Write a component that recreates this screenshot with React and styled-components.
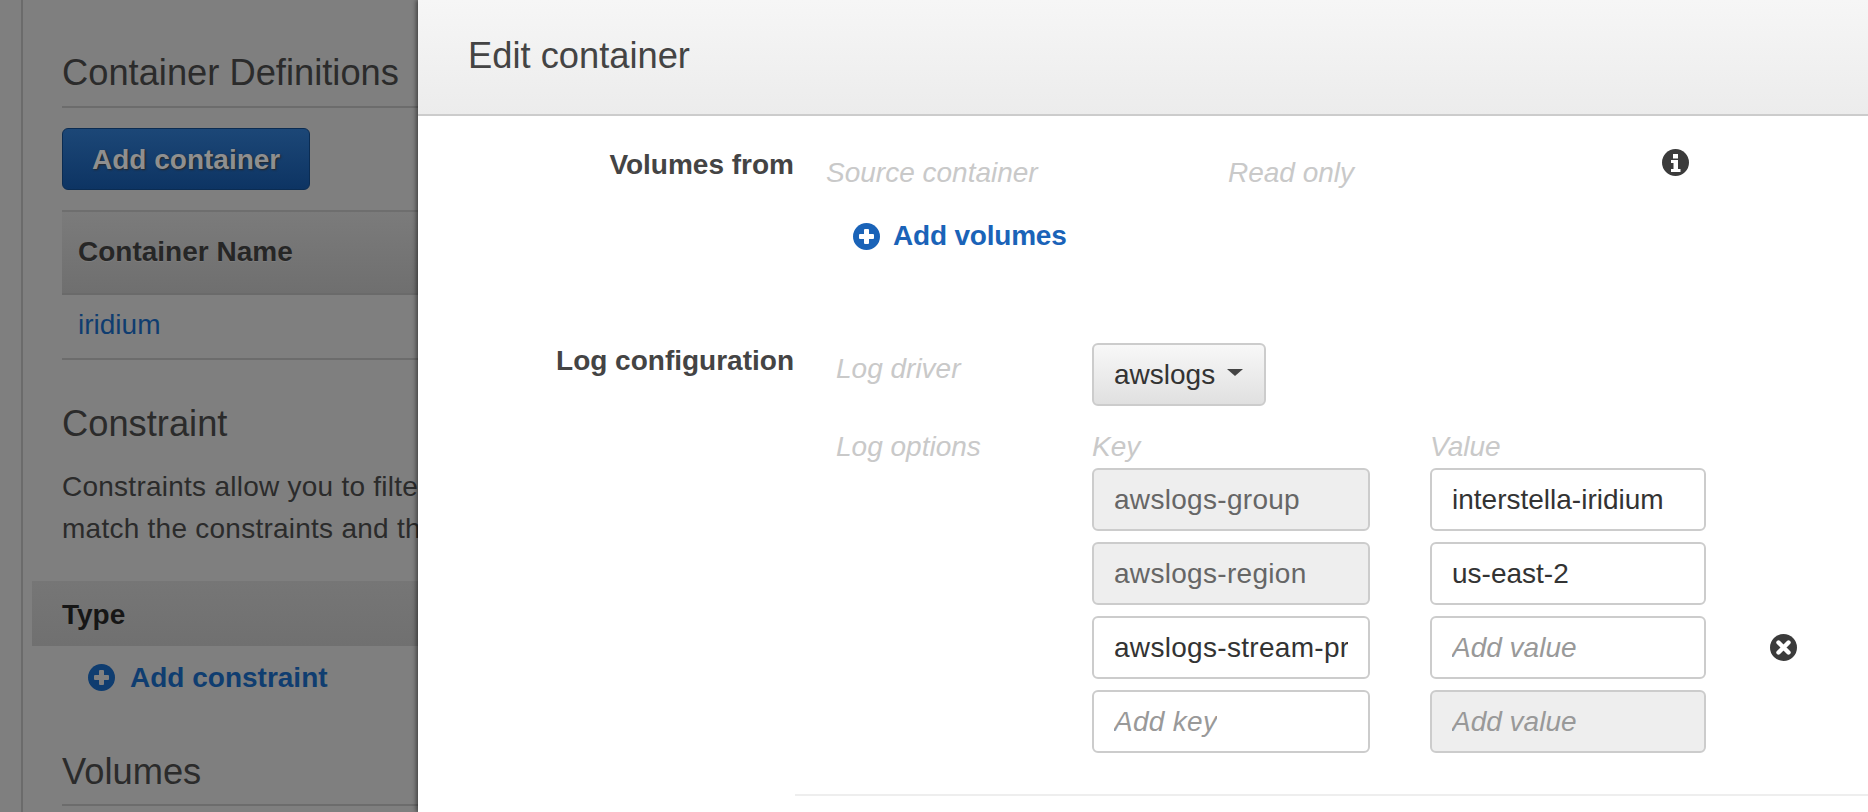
import React from 'react'
import styled, { createGlobalStyle } from 'styled-components'

const GlobalStyle = createGlobalStyle`
  html, body {
    margin: 0;
    padding: 0;
    background: #fff;
    overflow: hidden;
  }
  * {
    box-sizing: border-box;
  }
`

const PlusIcon = ({ color, cross }) => (
  <svg width="27" height="27" viewBox="0 0 27 27">
    <circle cx="13.5" cy="13.5" r="13.5" fill={color} />
    <rect x="11" y="6" width="5" height="15" rx="1" fill={cross} />
    <rect x="6" y="11" width="15" height="5" rx="1" fill={cross} />
  </svg>
)

const InfoIcon = () => (
  <svg width="27" height="27" viewBox="0 0 27 27">
    <circle cx="13.5" cy="13.5" r="13.5" fill="#3b3b3b" />
    <rect x="11" y="5" width="5" height="4.5" fill="#fff" />
    <path d="M9 11h7v9h2.5v3h-9.5v-3h2.5v-6h-2.5z" fill="#fff" />
  </svg>
)

const CloseIcon = () => (
  <svg width="27" height="27" viewBox="0 0 27 27">
    <circle cx="13.5" cy="13.5" r="13.5" fill="#3b3b3b" />
    <path d="M8.5 8.5l10 10M18.5 8.5l-10 10" stroke="#fff" strokeWidth="4.4" strokeLinecap="round" />
  </svg>
)

const keyValueRows = [
  { key: 'awslogs-group', keyLocked: true, value: 'interstella-iridium' },
  { key: 'awslogs-region', keyLocked: true, value: 'us-east-2' },
  { key: 'awslogs-stream-prefix', value: '', removable: true },
  { key: '', value: '', valueLocked: true },
]

const App = () => (
  <Page>
    <GlobalStyle />
    <Backdrop>
      <Rail>
        <SectionTitle>Container Definitions</SectionTitle>
        <AddContainerButton>Add container</AddContainerButton>
        <TableHead>Container Name</TableHead>
        <TableRow>iridium</TableRow>
        <PlainTitle>Constraint</PlainTitle>
        <Paragraph>
          Constraints allow you to filter
          <br />
          match the constraints and then
        </Paragraph>
        <TypeBand>Type</TypeBand>
        <AddConstraint>
          <PlusIcon color="#0f3d70" cross="#7f7f7f" />
          Add constraint
        </AddConstraint>
        <VolumesTitle>Volumes</VolumesTitle>
      </Rail>
    </Backdrop>
    <Panel>
      <PanelHeader>Edit container</PanelHeader>
      <VolumesRow>
        <FieldLabel>Volumes from</FieldLabel>
        <SourceHint>Source container</SourceHint>
        <ReadOnlyHint>Read only</ReadOnlyHint>
        <InfoSlot>
          <InfoIcon />
        </InfoSlot>
      </VolumesRow>
      <AddVolumes>
        <PlusIcon color="#1a63b8" cross="#fff" />
        Add volumes
      </AddVolumes>
      <LogRow>
        <LogLabel>Log configuration</LogLabel>
        <LogContent>
          <DriverRow>
            <DriverHint>Log driver</DriverHint>
            <Dropdown>
              awslogs
              <Caret />
            </Dropdown>
          </DriverRow>
          <OptionsRow>
            <OptionsHint>Log options</OptionsHint>
            <div>
              <ColumnHeads>
                <KeyHead>Key</KeyHead>
                <Hint>Value</Hint>
              </ColumnHeads>
              <Fields>
                {keyValueRows.map((row, i) => (
                  <FieldRow key={i}>
                    <Field $width={278} $locked={row.keyLocked} $empty={!row.key}>
                      <KeyText>{row.key || 'Add key'}</KeyText>
                    </Field>
                    <ValueField $width={276} $locked={row.valueLocked} $empty={!row.value}>
                      <FieldText>{row.value || 'Add value'}</FieldText>
                    </ValueField>
                    {row.removable ? (
                      <RemoveSlot>
                        <CloseIcon />
                      </RemoveSlot>
                    ) : null}
                  </FieldRow>
                ))}
              </Fields>
            </div>
          </OptionsRow>
        </LogContent>
      </LogRow>
      <Divider />
    </Panel>
  </Page>
)

export default App

const Page = styled.div`
  display: flex;
  width: 1868px;
  height: 812px;
  overflow: hidden;
  font-family: 'Liberation Sans', Arial, sans-serif;
  font-size: 28px;
`

const Backdrop = styled.div`
  flex: 0 0 418px;
  height: 812px;
  padding-left: 21px;
  background: #7f7f7f;
  overflow: hidden;
`

const Rail = styled.div`
  height: 812px;
  padding-left: 39px;
  border-left: 2px solid #6b6b6b;
  color: #2b2b2b;
  white-space: nowrap;
`

const SectionTitle = styled.h2`
  margin: 0;
  padding: 50px 0 10px;
  border-bottom: 2px solid #6c6c6c;
  font-size: 36.3px;
  font-weight: 400;
  line-height: 46px;
`

const AddContainerButton = styled.div`
  display: flex;
  align-items: center;
  width: 248px;
  height: 62px;
  margin-top: 20px;
  padding: 2px 0 0 29px;
  border: 1px solid #0b2c52;
  border-radius: 6px;
  background: linear-gradient(#1c4777, #0d3463);
  color: #8f8f8f;
  font-weight: 700;
  text-shadow: 1px 1px 2px #262626;
`

const TableHead = styled.div`
  display: flex;
  align-items: center;
  height: 85px;
  margin-top: 20px;
  padding: 0 0 2px 16px;
  border-top: 2px solid #6e6e6e;
  border-bottom: 2px solid #6a6a6a;
  background: linear-gradient(#7b7b7b, #6f6f6f);
  color: #262626;
  font-weight: 700;
  text-shadow: 0 1px 1px #7f7f7f;
`

const TableRow = styled.div`
  display: flex;
  align-items: center;
  height: 65px;
  padding: 0 0 3px 16px;
  border-bottom: 2px solid #6c6c6c;
  color: #0f3d70;
`

const PlainTitle = styled.h2`
  margin: 41px 0 0;
  font-size: 36.3px;
  font-weight: 400;
  line-height: 46px;
`

const Paragraph = styled.div`
  margin-top: 19px;
  line-height: 42px;
  letter-spacing: 0.25px;
`

const TypeBand = styled.div`
  display: flex;
  align-items: center;
  height: 65px;
  margin: 31px 0 0 -30px;
  padding: 2px 0 0 30px;
  background: linear-gradient(#767676, #707070);
  color: #161616;
  font-weight: 700;
`

const AddConstraint = styled.div`
  display: flex;
  align-items: center;
  gap: 15px;
  height: 27px;
  margin: 18px 0 0 26px;
  color: #0f3d70;
  font-weight: 700;
`

const VolumesTitle = styled(PlainTitle)`
  margin-top: 58px;
  padding-bottom: 9px;
  border-bottom: 2px solid #6c6c6c;
`

const Panel = styled.div`
  position: relative;
  flex: 1;
  height: 812px;
  background: #fff;
  box-shadow: -2px 0 4px rgba(0, 0, 0, 0.45);
  color: #444;
`

const PanelHeader = styled.div`
  display: flex;
  align-items: center;
  height: 116px;
  padding: 0 0 2px 50px;
  border-bottom: 2px solid #ccc;
  background: linear-gradient(#f6f6f6, #ececec);
  font-size: 36.3px;
  color: #444;
`

const VolumesRow = styled.div`
  display: flex;
  margin-top: 32px;
`

const FieldLabel = styled.div`
  flex: 0 0 376px;
  color: #444;
  font-weight: 700;
  line-height: 34px;
  text-align: right;
`

const LogLabel = styled(FieldLabel)`
  padding-top: 1px;
`

const Hint = styled.div`
  color: #c9c9c9;
  font-style: italic;
  line-height: 34px;
  white-space: nowrap;
`

const SourceHint = styled(Hint)`
  flex: 0 0 402px;
  margin: 8px 0 0 32px;
`

const ReadOnlyHint = styled(Hint)`
  flex: 0 0 434px;
  margin-top: 8px;
`

const InfoSlot = styled.div`
  display: flex;
  height: 27px;
  margin: 1px 0 0 0;
`

const AddVolumes = styled.div`
  display: flex;
  align-items: center;
  gap: 13px;
  height: 34px;
  margin: 29px 0 0 435px;
  color: #1a63b8;
  font-weight: 700;
  letter-spacing: -0.2px;
`

const LogRow = styled.div`
  display: flex;
  margin-top: 90px;
`

const LogContent = styled.div`
  margin-left: 42px;
`

const DriverRow = styled.div`
  display: flex;
`

const DriverHint = styled(Hint)`
  flex: 0 0 256px;
  margin-top: 9px;
`

const Dropdown = styled.div`
  display: flex;
  align-items: center;
  gap: 12px;
  width: 174px;
  height: 63px;
  padding-left: 20px;
  border: 2px solid #ccc;
  border-radius: 6px;
  background: linear-gradient(#f8f8f8, #e0e0e0);
  color: #333;
`

const Caret = styled.span`
  width: 0;
  height: 0;
  margin-top: -4px;
  border-left: 8px solid transparent;
  border-right: 8px solid transparent;
  border-top: 7px solid #444;
`

const OptionsRow = styled.div`
  display: flex;
  margin-top: 24px;
`

const OptionsHint = styled(Hint)`
  flex: 0 0 256px;
`

const ColumnHeads = styled.div`
  display: flex;
  margin-bottom: 4px;
`

const KeyHead = styled(Hint)`
  flex: 0 0 338px;
`

const Fields = styled.div`
  display: flex;
  flex-direction: column;
  gap: 11px;
`

const FieldRow = styled.div`
  display: flex;
  align-items: center;
`

const Field = styled.div`
  display: flex;
  align-items: center;
  width: ${({ $width }) => $width}px;
  height: 63px;
  padding: 1px 20px 0;
  border: 2px solid #ccc;
  border-radius: 6px;
  background: ${({ $locked }) => ($locked ? '#eee' : '#fff')};
  color: ${({ $locked, $empty }) => ($empty ? '#999' : $locked ? '#666' : '#333')};
  font-style: ${({ $empty }) => ($empty ? 'italic' : 'normal')};
`

const ValueField = styled(Field)`
  margin-left: 60px;
`

const FieldText = styled.span`
  display: block;
  overflow: hidden;
  white-space: nowrap;
`

const KeyText = styled(FieldText)`
  letter-spacing: 0.3px;
`

const RemoveSlot = styled.div`
  display: flex;
  margin-left: 64px;
`

const Divider = styled.div`
  margin: 41px 0 0 377px;
  border-top: 2px solid #eee;
`
